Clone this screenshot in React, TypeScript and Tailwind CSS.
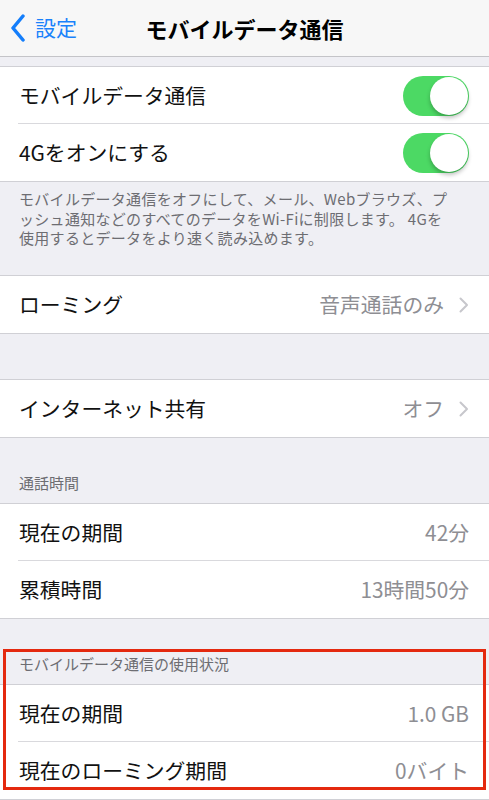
import React from "react";

const font = { fontFamily: '"Noto Sans CJK JP", "Noto Sans", sans-serif' };

const Toggle = () => (
  <div className="relative h-[40px] w-[66px] rounded-full bg-[#4cd964]">
    <div className="absolute right-[1px] top-[1px] h-[38px] w-[38px] rounded-full bg-white shadow-[0_3px_4px_rgba(0,0,0,0.25)]" />
  </div>
);

const Chevron = () => (
  <svg width="10" height="16" viewBox="0 0 10 16" className="ml-[15px]">
    <path d="M1.5 1.5 L8 8 L1.5 14.5" fill="none" stroke="#c7c7cc" strokeWidth="2" strokeLinecap="round" strokeLinejoin="round" />
  </svg>
);

type RowProps = {
  label: string;
  value?: string;
  chevron?: boolean;
  toggle?: boolean;
  last?: boolean;
};

const Row = ({ label, value, chevron, toggle, last }: RowProps) => (
  <div className="relative flex h-[57px] items-center bg-white pl-[19px] pr-[20px]">
    <span className="flex-1 text-[20.8px] text-[#111]">{label}</span>
    {value && <span className="text-[20.8px] text-[#8e8e93]">{value}</span>}
    {chevron && <Chevron />}
    {toggle && <Toggle />}
    {!last && <div className="absolute bottom-0 left-[18px] right-0 h-px bg-[#d9d9dd]" />}
  </div>
);

const Group = ({ children }: { children: React.ReactNode }) => (
  <div className="border-y border-[#d0d0d5] bg-white">{children}</div>
);

const Header = ({ text }: { text: string }) => (
  <div className="flex h-[65px] items-end pb-[9px] pl-[19px] text-[15px] text-[#6d6d72]">{text}</div>
);

export default function App() {
  return (
    <div className="h-[800px] w-[489px] overflow-hidden bg-[#efeff4]" style={font}>
      <div className="relative flex h-[57px] items-center justify-center border-b border-[#c4c4c8] bg-[#f7f7f7]">
        <div className="absolute left-[10px] top-0 flex h-full items-center">
          <svg width="16" height="28" viewBox="0 0 16 28">
            <path d="M13 2 L3 14 L13 26" fill="none" stroke="#147efb" strokeWidth="3.5" strokeLinecap="round" strokeLinejoin="round" />
          </svg>
          <span className="ml-[9px] text-[21px] text-[#1a82fb]">設定</span>
        </div>
        <span className="text-[22px] font-bold text-[#000]">モバイルデータ通信</span>
      </div>

      <div className="h-[9px]" />
      <Group>
        <Row label="モバイルデータ通信" toggle />
        <Row label="4Gをオンにする" toggle last />
      </Group>
      <div className="h-[93px] whitespace-nowrap px-[19px] pt-[7px] text-[15px] leading-[19.5px] tracking-[0.3px] text-[#6d6d72]">
        モバイルデータ通信をオフにして、メール、Webブラウズ、プ
        <br />
        ッシュ通知などのすべてのデータをWi-Fiに制限します。 4Gを
        <br />
        使用するとデータをより速く読み込めます。
      </div>
      <Group>
        <Row label="ローミング" value="音声通話のみ" chevron last />
      </Group>

      <div className="h-[45px]" />
      <Group>
        <Row label="インターネット共有" value="オフ" chevron last />
      </Group>

      <Header text="通話時間" />
      <Group>
        <Row label="現在の期間" value="42分" />
        <Row label="累積時間" value="13時間50分" last />
      </Group>

      <div className="relative">
        <Header text="モバイルデータ通信の使用状況" />
        <Group>
          <Row label="現在の期間" value="1.0 GB" />
          <Row label="現在のローミング期間" value="0バイト" last />
        </Group>
        <div className="pointer-events-none absolute left-[3px] right-[3px] top-[30px] bottom-[10px] border-[3px] border-[#e4290f]" />
      </div>
    </div>
  );
}
